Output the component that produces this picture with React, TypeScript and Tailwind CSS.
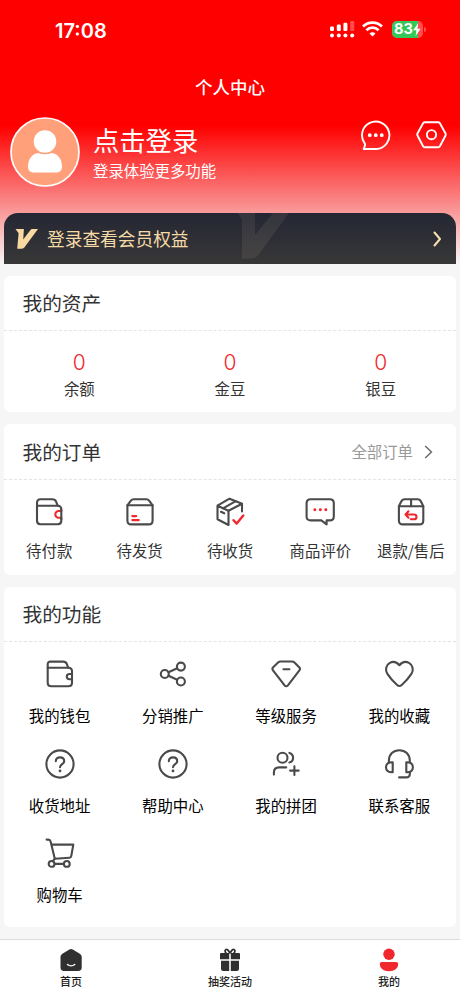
import React from 'react';

interface MenuItem {
  label: string;
  icon: React.ReactNode;
}

// All menu icons share the same 30px line style
function Icon({ children }: { children: React.ReactNode }) {
  return (
    <svg
      className="w-[30px] h-[30px] overflow-visible"
      viewBox="0 0 30 30"
      fill="none"
      stroke="#4a4a4a"
      strokeWidth="2.1"
      strokeLinecap="round"
      strokeLinejoin="round"
    >
      {children}
    </svg>
  );
}

const RED = '#f0282d';

const question = (
  <Icon>
    <circle cx="15" cy="15" r="13.6" />
    <path d="M10.8 12.2C10.8 9.8 12.6 8.4 15 8.4s4.2 1.5 4.2 3.8c0 2.8-4.2 3-4.2 6" />
    <circle cx="15" cy="21.9" r="1.4" fill="#4a4a4a" stroke="none" />
  </Icon>
);

const assets = [
  { label: '余额', value: 0 },
  { label: '金豆', value: 0 },
  { label: '银豆', value: 0 },
];

const orders: MenuItem[] = [
  {
    label: '待付款',
    icon: (
      <Icon>
        <path d="M3 8.7V6C3 3.8 4.3 2.3 6.5 2.3h11.8c2.2 0 3.2.8 3.9 2.6l1.5 3.8" />
        <path d="M27.3 13.5v-1.3c0-2.2-1.3-3.5-3.5-3.5H3v15.1c0 2.2 1.3 3.5 3.5 3.5h17.3c2.2 0 3.5-1.3 3.5-3.5v-2.3" />
        <path d="M27.3 14h-2.6a3.4 3.4 0 0 0 0 6.8h2.6" stroke={RED} />
        <path d="M27.3 13v9" />
      </Icon>
    ),
  },
  {
    label: '待发货',
    icon: (
      <Icon>
        <path d="M2.4 8.3h25.2v15.2c0 2.6-1.4 3.9-3.900 3.900H6.3c-2.500 0-3.900-1.300-3.900-3.900z" />
        <path d="M2.4 8.3l3.3-4.4c.8-1.100 1.600-1.600 3-1.600h12.600c1.400 0 2.200.5 3 1.600l3.300 4.400" />
        <path d="M7.3 19.1h3.9M7.3 23.1h6.5" stroke={RED} />
      </Icon>
    ),
  },
  {
    label: '待收货',
    icon: (
      <Icon>
        <path d="M27 14.500V6.800L14.500 1.700 2.500 8.700v13.600L13.500 28V13.800L2.500 8.700" />
        <path d="M13.500 13.800L27 6.800M8 11.300L20.800 4.200M6 14.800l3.200 1.500" />
        <path d="M18.500 23.200l3.200 3.400 6.600-8.200" stroke={RED} strokeWidth="2.400" />
      </Icon>
    ),
  },
  {
    label: '商品评价',
    icon: (
      <Icon>
        <path d="M5.6 2.3h19.2c2.600 0 4 1.400 4 4v13.100c0 2.600-1.300 4-4 4h-3.200v4l-5.300-4H5.600c-2.600 0-4-1.400-4-4V6.300c0-2.600 1.400-4 4-4z" />
        <path d="M9.800 12.800h.1M15.300 12.800h.1M20.800 12.800h.1" stroke={RED} strokeWidth="2.900" />
      </Icon>
    ),
  },
  {
    label: '退款/售后',
    icon: (
      <Icon>
        <path d="M2.900 9.200h24.400v14.300c0 2.600-1.400 3.900-3.900 3.900H6.800c-2.500 0-3.900-1.300-3.900-3.900z" />
        <path d="M2.900 9.200l2.200-4.500c.8-1.700 1.700-2.400 3.500-2.400h13c1.800 0 2.700.7 3.500 2.400l2.200 4.500M15.100 2.300v6.900" />
        <path d="M12.500 14.300l-3 3.200 3 3.200M9.800 17.500h8c1.800 0 2.700 1 2.700 2.400s-.9 2.400-2.700 2.400h-3" stroke={RED} />
      </Icon>
    ),
  },
];

const features: MenuItem[] = [
  {
    label: '我的钱包',
    icon: (
      <Icon>
        <path d="M2.700 8.700V5.400c0-1.900 1-2.800 2.800-2.800h12.700c2 0 3 .7 3.700 2.600l1.200 3.500" />
        <path d="M27 14v-1.700c0-2.300-1.300-3.600-3.600-3.600H2.700v15.100c0 2.300 1.300 3.500 3.600 3.500h17.100c2.300 0 3.600-1.200 3.600-3.500V14z" />
        <path d="M27 15h-2.600a2.500 2.500 0 0 0 0 5.200H27" />
      </Icon>
    ),
  },
  {
    label: '分销推广',
    icon: (
      <Icon>
        <circle cx="6.800" cy="15" r="4" />
        <circle cx="22.900" cy="7.600" r="4" />
        <circle cx="22.900" cy="22.500" r="4" />
        <path d="M10.500 13.300l8.700-4M10.500 16.700l8.700 4" />
      </Icon>
    ),
  },
  {
    label: '等级服务',
    icon: (
      <Icon>
        <path d="M9.400 2.500h11.800c.8 0 1.400.2 2 .7l5 5c1 1 1 2.100.2 3.200L16.900 26.300c-1 1.200-2.300 1.200-3.300 0L2 11.400c-.8-1.100-.8-2.200.2-3.200l5.100-5c.6-.5 1.300-.7 2.100-.7z" />
        <path d="M12.400 10.200h6" />
      </Icon>
    ),
  },
  {
    label: '我的收藏',
    icon: (
      <Icon>
        <path d="M15.400 6.200C12.700 3 9 2.200 5.800 3.900 1.900 6 .9 10.900 3.400 14.900c2.400 3.700 6.200 7.900 9.700 11.100 1.600 1.400 3 1.400 4.600 0 3.500-3.200 7.300-7.400 9.700-11.100 2.500-4 1.500-8.900-2.400-11-3.200-1.700-6.900-.9-9.600 2.300z" />
      </Icon>
    ),
  },
  { label: '收货地址', icon: question },
  { label: '帮助中心', icon: question },
  {
    label: '我的拼团',
    icon: (
      <Icon>
        <circle cx="11.500" cy="8.700" r="5" />
        <path d="M18.400 3.900c2.300.7 3.700 2.500 3.700 4.800s-1.400 4.100-3.700 4.800" />
        <path d="M2.900 25.600v-2.100c0-3.300 2.100-5.100 5.300-5.100h7M23.400 17.300v8.600M19.100 21.600h8.600" />
      </Icon>
    ),
  },
  {
    label: '联系客服',
    icon: (
      <Icon>
        <path d="M4.900 13.500v-2C4.900 5.400 9.300 1.200 15.300 1.200s10.500 4.200 10.500 10.300v2" />
        <path d="M8.700 13.200v10C4.300 23.400 2 21.600 2 18.200s2.300-5.200 6.700-5zM22.300 13.200v10c4.300.2 6.600-1.600 6.600-5s-2.300-5.200-6.600-5z" />
        <path d="M25.900 23.200v1.200c0 2.700-1.300 4-4 4h-6.800" />
      </Icon>
    ),
  },
  {
    label: '购物车',
    icon: (
      <Icon>
        <path d="M1.600 1.600h1.800c1.300 0 1.900.6 2.200 1.900l4.200 17.200 14.600-1c1.200-.1 1.700-.6 1.900-1.800l2-11.300H6.300" />
        <path d="M9.800 20.700l-2 2.500M9.500 25.900h9.300" />
        <circle cx="6.600" cy="25.900" r="2.900" />
        <circle cx="21.800" cy="25.900" r="2.900" />
      </Icon>
    ),
  },
];

function StatusBar() {
  return (
    <div className="h-[60px] pl-[55px] pr-[34px] flex items-center justify-between text-white">
      <span className="pt-px font-[Inter] text-[20px] font-semibold leading-none">17:08</span>
      <div className="flex items-center pb-[2px]">
        {/* Dual SIM signal */}
        <svg className="w-[25px] h-[17px] mr-[7px]" viewBox="0 0 25 17" fill="#fff">
          <rect x="0" y="5.500" width="4" height="4.500" rx="1.300" />
          <rect x="6.800" y="3.500" width="4" height="6.500" rx="1.300" />
          <rect x="13.400" y="1.800" width="4" height="8.200" rx="1.300" />
          <rect x="20.200" y="0" width="4" height="10" rx="1.300" opacity=".3" />
          <circle cx="2" cy="14.500" r="2" />
          <circle cx="8.800" cy="14.500" r="2" />
          <circle cx="15.400" cy="14.500" r="2" />
          <circle cx="22.200" cy="14.500" r="2" />
        </svg>
        <svg className="w-[21px] h-4 mr-[9px]" viewBox="0 0 21 16" fill="none" stroke="#fff" strokeWidth="2.800">
          <path d="M1 5.400a13.600 13.600 0 0 1 19 0" />
          <path d="M4.400 9.200a8.600 8.600 0 0 1 12.200 0" />
          <path d="M10.500 15.600l-3-3.200a4.200 4.200 0 0 1 6 0z" fill="#fff" stroke="none" />
        </svg>
        <div className="relative w-[31px] h-[17px] rounded-[5px] overflow-hidden bg-[#ff4d4d] flex items-center">
          <div className="absolute inset-y-0 left-0 w-[26px] bg-[#35c759]" />
          <span className="relative pl-[2px] font-[Inter] text-[14.500px] font-bold leading-none">83</span>
          <svg className="relative w-2 h-[13px]" viewBox="0 0 8 13" fill="#fff">
            <path d="M5.200 0L.2 7.200h3.200L2.600 13l5-7.200H4.400z" />
          </svg>
        </div>
        <div className="w-[2px] h-[5px] ml-px rounded-r bg-[#ff4d4d]" />
      </div>
    </div>
  );
}

function UserHeader() {
  return (
    <div className="h-[97px] pt-px pl-[10px] pr-[13px] flex items-start">
      <svg className="w-[70px] h-[70px]" viewBox="0 0 70 70">
        <circle cx="35" cy="35" r="34" fill="#ffa07a" stroke="#fff" strokeWidth="1.700" />
        <circle cx="35" cy="24.500" r="11.300" fill="#fff" />
        <path d="M18 49.500c0-7.500 4.500-13 10.200-13.500 4.300 1.700 9.300 1.700 13.600 0C47.500 36.500 52 42 52 49.500c0 4.500-2.500 6-6.500 6h-21c-4 0-6.500-1.500-6.500-6z" fill="#fff" />
      </svg>
      <div className="ml-[13px] mt-[5px] text-white">
        <div className="text-[26.300px] leading-[36px]">点击登录</div>
        <div className="text-[15.400px] leading-[22px] mt-px">登录体验更多功能</div>
      </div>
      <div className="ml-auto mt-[2px] flex gap-6">
        <svg className="w-8 h-8" viewBox="0 0 32 32" fill="none" stroke="#fff" strokeWidth="1.900" strokeLinejoin="round">
          <path d="M4.700 30H17.300A13.700 13.700 0 1 0 5.800 24.600c.5.700.4 1.200.1 2z" />
          <path d="M10.700 16.200h.1M16.700 16.200h.1M22.700 16.200h.1" strokeWidth="3.700" strokeLinecap="round" />
        </svg>
        <svg className="w-8 h-8" viewBox="0 0 32 32" fill="none" stroke="#fff" strokeWidth="1.900" strokeLinejoin="round">
          <path d="M9.900 3.200h13.200c.8 0 1.400.4 1.800 1l5.500 10c.5 1 .5 1.700 0 2.600l-5.500 10.400c-.4.700-1 1-1.800 1H9.900c-.8 0-1.400-.3-1.800-1L2.600 16.800c-.5-.9-.5-1.600 0-2.600l5.500-10c.4-.6 1-1 1.800-1z" />
          <circle cx="16.500" cy="15.700" r="4.600" />
        </svg>
      </div>
    </div>
  );
}

function MemberBar() {
  return (
    <div className="relative h-[51px] mx-1 pl-[11px] pr-[14px] flex items-center rounded-t-[14px] overflow-hidden bg-linear-to-b/srgb from-[#242633] to-[#383838]">
      <svg className="absolute left-[234px] top-0 w-[54px] h-[50px]" viewBox="0 0 54 50" fill="#ffe9c9" fillOpacity=".08">
        <path d="M0 0h17v22L35 0h16L21 41c-2.500 3.500-4.500 4.500-9 4.500H4V7z" />
      </svg>
      <svg className="w-6 h-[22px]" viewBox="0 0 24 22" fill="#f8d9a0">
        <path d="M.5 1h8.400L8.200 11.500 15.300 2.200c.6-.8 1.100-1.200 2.200-1.200H23L9.500 19.300c-.8 1-1.500 1.400-2.800 1.400H2.200L3.600 5.300z" />
      </svg>
      <span className="ml-2 text-[17.700px] text-[#f6dba6]">登录查看会员权益</span>
      <svg className="ml-auto w-[9px] h-4" viewBox="0 0 9 16" fill="none" stroke="#f8dfae" strokeWidth="2" strokeLinecap="round" strokeLinejoin="round">
        <path d="M1.500 1.500L7 8l-5.500 6.500" />
      </svg>
    </div>
  );
}

function CardTitle({ title, extra }: { title: string; extra?: React.ReactNode }) {
  return (
    <div className="h-[55px] pl-[18.500px] pr-[23px] flex items-center justify-between border-b border-dashed border-[#e4e4e4]">
      <h2 className="text-[19.700px] text-[#333]">{title}</h2>
      {extra}
    </div>
  );
}

function TabBar() {
  return (
    <nav className="h-[57px] px-[49px] flex justify-between bg-white border-t border-[#dcdcdc] text-[11px] font-medium text-[#222]">
      <div className="w-11 flex flex-col items-center">
        <svg className="w-6 h-6 mt-2" viewBox="0 0 24 24">
          <path d="M10.400 1.500c1.200-.7 2.200-.7 3.400 0l7 4.300c1.300.8 1.900 1.800 1.900 3.200v10.500c0 2.300-1.200 3.500-3.500 3.500H5c-2.300 0-3.500-1.200-3.500-3.500V9c0-1.400.6-2.400 1.900-3.200z" fill="#303030" />
          <path d="M8.500 16.500c2 1.700 5.200 1.700 7.200 0" fill="none" stroke="#fff" strokeWidth="1.500" strokeLinecap="round" />
        </svg>
        <span className="mt-px leading-4">首页</span>
      </div>
      <div className="w-11 flex flex-col items-center">
        <svg className="w-6 h-6 mt-2" viewBox="0 0 24 24" fill="#303030">
          <path d="M3.300 5h7.900v6.300H2V6.300C2 5.500 2.500 5 3.300 5zM12.800 5h7.900c.8 0 1.300.5 1.300 1.300v5h-9.200zM3 12.800h8.200V23H5.500C3.800 23 3 22.200 3 20.500zM12.800 12.800H21v7.700c0 1.700-.8 2.500-2.500 2.500h-5.700z" />
          <path d="M12 5.500c-1.500-3.500-3-4.500-4.300-3.800-1.500.9-.2 3.500 1.300 4M12 5.500c1.500-3.500 3-4.500 4.300-3.800 1.500.9.2 3.500-1.300 4" fill="none" stroke="#303030" strokeWidth="1.700" />
        </svg>
        <span className="mt-px leading-4 whitespace-nowrap">抽奖活动</span>
      </div>
      <div className="w-11 flex flex-col items-center">
        <svg className="w-6 h-6 mt-2" viewBox="0 0 24 24" fill="#f0282d">
          <circle cx="12" cy="6.200" r="5.700" />
          <path d="M5 14h14c1.500 0 2.200.8 2.200 2.100 0 4.200-3.700 7.200-9.200 7.200s-9.200-3-9.200-7.200C2.800 14.800 3.500 14 5 14z" />
        </svg>
        <span className="mt-px leading-4">我的</span>
      </div>
    </nav>
  );
}

export default function App() {
  return (
    <div className="w-[460px] h-[996px] flex flex-col overflow-hidden bg-[#f6f6f6] font-['Noto_Sans_CJK_SC',sans-serif]">
      <div className="h-[264px] shrink-0 bg-linear-to-b/srgb from-[#ff0000] from-[126px] to-[#f6f6f6] to-[264px]">
        <StatusBar />
        <h1 className="h-14 pb-[2px] flex items-center justify-center text-[17.500px] font-medium text-white">个人中心</h1>
        <UserHeader />
        <MemberBar />
      </div>

      <main className="flex-1 px-1 pt-3 flex flex-col">
        {/* Assets */}
        <section className="h-[136px] rounded-md bg-white">
          <CardTitle title="我的资产" />
          <div className="grid grid-cols-3 pt-[18px] text-center">
            {assets.map(item => (
              <div key={item.label}>
                <div className="font-[Inter] font-light text-[21px] leading-[27px] text-[#f0282d]">{item.value}</div>
                <div className="text-[15.400px] leading-6 text-[#333]">{item.label}</div>
              </div>
            ))}
          </div>
        </section>

        {/* Orders */}
        <section className="mt-3 h-[151px] pt-px rounded-md bg-white">
          <CardTitle
            title="我的订单"
            extra={
              <div className="flex items-center gap-[11px] text-[15.400px] text-[#999]">
                全部订单
                <svg className="w-[9px] h-[14px]" viewBox="0 0 9 14" fill="none" stroke="#666" strokeWidth="1.400">
                  <path d="M1.200 1l6.300 6-6.300 6" />
                </svg>
              </div>
            }
          />
          <div className="grid grid-cols-5 pt-[17px]">
            {orders.map(item => (
              <div key={item.label} className="flex flex-col items-center">
                {item.icon}
                <span className="mt-[11px] text-[15.400px] leading-6 whitespace-nowrap text-[#333]">{item.label}</span>
              </div>
            ))}
          </div>
        </section>

        {/* Features */}
        <section className="mt-3 h-[340px] rounded-md bg-white">
          <CardTitle title="我的功能" />
          <div className="-ml-px grid grid-cols-4 gap-y-[20.700px] pt-[17px]">
            {features.map(item => (
              <div key={item.label} className="h-[69px] flex flex-col items-center">
                {item.icon}
                <span className="mt-[14px] text-[15.400px] leading-6 text-black">{item.label}</span>
              </div>
            ))}
          </div>
        </section>
      </main>

      <TabBar />
    </div>
  );
}
